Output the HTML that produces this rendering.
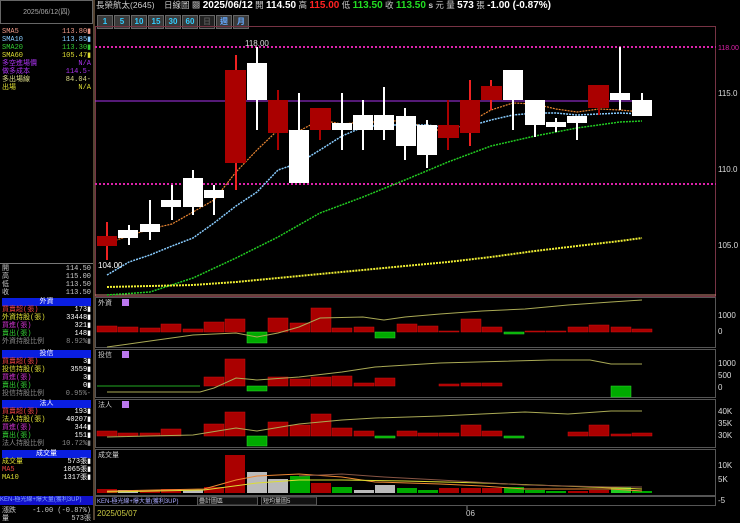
<!DOCTYPE html><html><head><meta charset="utf-8"><style>
body{margin:0;background:#000;width:740px;height:520px;overflow:hidden;position:relative;font-family:"Liberation Sans","Noto Sans CJK TC",sans-serif;}
.a{position:absolute;}
.l{position:absolute;left:2px;width:89px;font-size:7px;line-height:8px;font-family:"Liberation Mono","Noto Sans CJK TC",monospace;}
.l div{display:flex;justify-content:space-between;height:8px}
.h{background:#0a1ee0;color:#fff;text-align:center;font-size:7px;line-height:9px;display:block!important}
.btn{display:inline-block;width:14px;height:12px;background:#3a3a3a;border:1px solid #666;color:#3cf;font-size:8px;text-align:center;line-height:12px;margin-right:1px;font-weight:bold}
</style></head><body>
<div class="a" style="left:0;top:0;width:93px;height:24px;border:1px solid #666;color:#aaa;font-size:7px;text-align:center;line-height:24px;box-sizing:border-box">2025/06/12(四)</div>
<div class="a" style="left:93px;top:0;width:2px;height:520px;background:#543"></div>
<div class="a" style="left:96px;top:0;font-size:8.5px;color:#ccc;line-height:10px;white-space:nowrap">長榮航太(2645) &nbsp; &nbsp;日線圖 ▩ <b style="color:#fff;font-size:10px">2025/06/12</b> 開 <b style="color:#fff;font-size:10px">114.50</b> 高 <b style="color:#f22;font-size:10px">115.00</b> 低 <b style="color:#2d2;font-size:10px">113.50</b> 收 <b style="color:#2d2;font-size:10px">113.50</b> <b>s</b> 元 量 <b style="color:#fff;font-size:10px">573</b> 張 <b style="color:#fff;font-size:10px">-1.00 (-0.87%)</b></div>
<div class="a" style="left:97px;top:11px;white-space:nowrap"><span class="btn">1</span><span class="btn">5</span><span class="btn">10</span><span class="btn">15</span><span class="btn">30</span><span class="btn">60</span><span class="btn" style="background:#222;color:#555">日</span><span class="btn" style="color:#6af">週</span><span class="btn" style="color:#6af">月</span></div>
<div class="l" style="top:28px">
<div style="color:#e98"><span>SMA5</span><span>113.80▮</span></div>
<div style="color:#8cf"><span>SMA10</span><span>113.85▮</span></div>
<div style="color:#3c3"><span>SMA20</span><span>113.30▮</span></div>
<div style="color:#dd3"><span>SMA60</span><span>105.47▮</span></div>
<div style="color:#a3e"><span>多空進場價</span><span>N/A</span></div>
<div style="color:#a3e"><span>做多成本</span><span>114.5-</span></div>
<div style="color:#dd8"><span>多出場線</span><span>84.04-</span></div>
<div style="color:#dd3"><span>出場</span><span>N/A</span></div></div>
<div class="a" style="left:0;top:263px;width:93px;height:1px;background:#777"></div>
<div class="l" style="top:265px;color:#ccc">
<div><span>開</span><span>114.50</span></div><div><span>高</span><span>115.00</span></div><div><span>低</span><span>113.50</span></div><div><span>收</span><span>113.50</span></div></div>
<div class="l" style="top:298px"><div class="h">外資</div>
<div style="color:#e44"><span>買賣超(張)</span><span style="color:#fff">173▮</span></div>
<div style="color:#dd3"><span>外資持股(張)</span><span style="color:#fff">33448▮</span></div>
<div style="color:#c3c"><span>買進(張)</span><span style="color:#fff">321▮</span></div>
<div style="color:#3c3"><span>賣出(張)</span><span style="color:#fff">148▮</span></div>
<div style="color:#888"><span>外資持股比例</span><span>8.92%▮</span></div></div>
<div class="l" style="top:350px"><div class="h">投信</div>
<div style="color:#e44"><span>買賣超(張)</span><span style="color:#fff">3▮</span></div>
<div style="color:#dd3"><span>投信持股(張)</span><span style="color:#fff">3559▮</span></div>
<div style="color:#c3c"><span>買進(張)</span><span style="color:#fff">3▮</span></div>
<div style="color:#3c3"><span>賣出(張)</span><span style="color:#fff">0▮</span></div>
<div style="color:#888"><span>投信持股比例</span><span>0.95%-</span></div></div>
<div class="l" style="top:400px"><div class="h">法人</div>
<div style="color:#e44"><span>買賣超(張)</span><span style="color:#fff">193▮</span></div>
<div style="color:#dd3"><span>法人持股(張)</span><span style="color:#fff">40207▮</span></div>
<div style="color:#c3c"><span>買進(張)</span><span style="color:#fff">344▮</span></div>
<div style="color:#3c3"><span>賣出(張)</span><span style="color:#fff">151▮</span></div>
<div style="color:#888"><span>法人持股比例</span><span>10.72%▮</span></div></div>
<div class="l" style="top:450px"><div class="h">成交量</div>
<div style="color:#dd3"><span>成交量</span><span style="color:#fff">573張▮</span></div>
<div style="color:#e44"><span>MA5</span><span style="color:#fff">1065張▮</span></div>
<div style="color:#dd3"><span>MA10</span><span style="color:#fff">1317張▮</span></div></div>
<div class="a" style="left:0;top:496px;width:93px;height:9px;background:#11c;color:#8af;font-size:6px;line-height:9px;white-space:nowrap;overflow:hidden">KEN-極光線+爆大量(獲利3UP)</div>
<div class="l" style="top:507px;color:#ccc"><div><span>漲跌</span><span>-1.00 (-0.87%)</span></div><div><span>量</span><span>573張</span></div></div>

<svg class="a" style="left:0;top:0" width="740" height="520">
<g fill="none" stroke="#555"><rect x="95.5" y="26.5" width="620" height="270" stroke="#734"/>
<rect x="95.5" y="297.5" width="620" height="50"/><rect x="95.5" y="349.5" width="620" height="48"/><rect x="95.5" y="399.5" width="620" height="48"/><rect x="95.5" y="449.5" width="620" height="46"/></g>
<line x1="95" y1="47" x2="716" y2="47" stroke="#d2a" stroke-width="2" stroke-dasharray="2,2"/>
<line x1="95" y1="184" x2="716" y2="184" stroke="#d2a" stroke-width="2" stroke-dasharray="2,2"/>
<line x1="95" y1="101" x2="642" y2="101" stroke="#a3e"/>
<line x1="95" y1="295" x2="716" y2="295" stroke="#c87"/>
<g font-size="8" fill="#ddd" font-family="Liberation Sans"><text x="245" y="46">118.00</text><text x="98" y="268" fill="#fff">104.00</text>
<text x="718" y="50" fill="#d2a" font-size="7">118.00</text><text x="718" y="96">115.0</text><text x="718" y="172">110.0</text><text x="718" y="248">105.0</text>
<text x="718" y="318">1000</text><text x="718" y="334">0</text><text x="718" y="366">1000</text><text x="718" y="378">500</text><text x="718" y="390">0</text>
<text x="718" y="414">40K</text><text x="718" y="426">35K</text><text x="718" y="438">30K</text><text x="718" y="468">10K</text><text x="718" y="482">5K</text><text x="718" y="503">-5</text></g>
<polyline fill="none" stroke="#e83" stroke-width="1.2" stroke-dasharray="2,1" points="107,243 129,236 150,229 172,224 193,212 214,200 236,172 257,150 278,130 299,131 320,120 342,124 363,122 384,122 405,120 427,128 448,132 470,122 491,110 513,103 535,104 556,109 577,112 599,109 620,110 642,112"/>
<polyline fill="none" stroke="#8cf" stroke-width="1.5" stroke-dasharray="2,1" points="107,275 129,262 150,255 172,246 193,238 214,223 236,206 257,192 278,170 299,163 320,150 342,136 363,127 384,125 405,125 427,125 448,128 470,126 491,120 513,115 535,113 556,113 577,115 599,114 620,113 642,114"/>
<polyline fill="none" stroke="#2c2" stroke-width="1.5" stroke-dasharray="2,1" points="107,295 150,292 193,278 236,258 278,237 320,213 363,197 405,180 448,162 491,146 535,136 577,128 620,122 642,121"/>
<polyline fill="none" stroke="#ee3" stroke-width="2" stroke-dasharray="2,1" points="107,287 150,286 193,285 236,282 278,278 320,274 363,270 405,266 448,262 491,257 535,251 577,246 620,241 642,238"/>
<g stroke-width="2">
<line x1="107" y1="222" x2="107" y2="260" stroke="#e22"/><rect x="97" y="236" width="20" height="10" fill="#a00"/>
<line x1="129" y1="225" x2="129" y2="245" stroke="#fff"/><rect x="118" y="230" width="20" height="8" fill="#fff"/>
<line x1="150" y1="200" x2="150" y2="240" stroke="#fff"/><rect x="140" y="224" width="20" height="8" fill="#fff"/>
<line x1="172" y1="185" x2="172" y2="220" stroke="#fff"/><rect x="161" y="200" width="20" height="7" fill="#fff"/>
<line x1="193" y1="170" x2="193" y2="215" stroke="#fff"/><rect x="183" y="178" width="20" height="29" fill="#fff"/>
<line x1="214" y1="185" x2="214" y2="215" stroke="#fff"/><rect x="204" y="190" width="20" height="8" fill="#fff"/>
<line x1="236" y1="55" x2="236" y2="190" stroke="#e22"/><rect x="225" y="70" width="21" height="93" fill="#a00"/>
<line x1="257" y1="47" x2="257" y2="130" stroke="#fff"/><rect x="247" y="63" width="20" height="37" fill="#fff"/>
<line x1="278" y1="90" x2="278" y2="150" stroke="#a00"/><rect x="268" y="100" width="20" height="33" fill="#a00"/>
<line x1="299" y1="93" x2="299" y2="183" stroke="#fff"/><rect x="289" y="130" width="20" height="53" fill="#fff"/>
<line x1="320" y1="108" x2="320" y2="140" stroke="#a00"/><rect x="310" y="108" width="21" height="22" fill="#a00"/>
<line x1="342" y1="93" x2="342" y2="150" stroke="#fff"/><rect x="332" y="123" width="20" height="7" fill="#fff"/>
<line x1="363" y1="100" x2="363" y2="150" stroke="#fff"/><rect x="353" y="115" width="20" height="15" fill="#fff"/>
<line x1="384" y1="87" x2="384" y2="140" stroke="#fff"/><rect x="374" y="115" width="20" height="15" fill="#fff"/>
<line x1="405" y1="108" x2="405" y2="160" stroke="#fff"/><rect x="396" y="116" width="20" height="30" fill="#fff"/>
<line x1="427" y1="120" x2="427" y2="168" stroke="#fff"/><rect x="417" y="125" width="20" height="30" fill="#fff"/>
<line x1="448" y1="100" x2="448" y2="150" stroke="#a00"/><rect x="438" y="125" width="21" height="13" fill="#a00"/>
<line x1="470" y1="80" x2="470" y2="146" stroke="#e22"/><rect x="460" y="100" width="20" height="33" fill="#a00"/>
<line x1="491" y1="80" x2="491" y2="110" stroke="#e22"/><rect x="481" y="86" width="21" height="14" fill="#a00"/>
<line x1="513" y1="70" x2="513" y2="130" stroke="#fff"/><rect x="503" y="70" width="20" height="30" fill="#fff"/>
<line x1="535" y1="100" x2="535" y2="137" stroke="#fff"/><rect x="525" y="100" width="20" height="25" fill="#fff"/>
<line x1="556" y1="118" x2="556" y2="132" stroke="#fff"/><rect x="546" y="122" width="20" height="5" fill="#fff"/>
<line x1="577" y1="116" x2="577" y2="140" stroke="#fff"/><rect x="567" y="116" width="20" height="7" fill="#fff"/>
<line x1="599" y1="85" x2="599" y2="115" stroke="#a00"/><rect x="588" y="85" width="21" height="23" fill="#a00"/>
<line x1="620" y1="47" x2="620" y2="110" stroke="#fff"/><rect x="610" y="93" width="20" height="7" fill="#fff"/>
<line x1="642" y1="93" x2="642" y2="116" stroke="#fff"/><rect x="632" y="100" width="20" height="16" fill="#fff"/>
</g>
<g font-size="7" fill="#ccc"><text x="98" y="305">外資</text><text x="98" y="357">投信</text><text x="98" y="407">法人</text><text x="98" y="457">成交量</text></g>
<g fill="#b7e"><rect x="122" y="299" width="7" height="7"/><rect x="122" y="351" width="7" height="7"/><rect x="122" y="401" width="7" height="7"/></g>
<g fill="#a00" stroke="#c11" stroke-width=".5">
<rect x="97" y="326" width="20" height="6"/><rect x="118" y="327" width="20" height="5"/><rect x="140" y="328" width="20" height="4"/><rect x="161" y="324" width="20" height="8"/><rect x="183" y="329" width="20" height="3"/><rect x="204" y="322" width="20" height="10"/><rect x="225" y="319" width="20" height="13"/><rect x="268" y="318" width="20" height="14"/><rect x="290" y="323" width="20" height="9"/><rect x="311" y="308" width="20" height="24"/><rect x="332" y="328" width="20" height="4"/><rect x="354" y="327" width="20" height="5"/><rect x="397" y="324" width="20" height="8"/><rect x="418" y="326" width="20" height="6"/><rect x="439" y="331" width="20" height="1"/><rect x="461" y="319" width="20" height="13"/><rect x="482" y="327" width="20" height="5"/><rect x="525" y="331" width="20" height="1"/><rect x="546" y="331" width="20" height="1"/><rect x="568" y="327" width="20" height="5"/><rect x="589" y="325" width="20" height="7"/><rect x="611" y="327" width="20" height="5"/><rect x="632" y="329" width="20" height="3"/></g>
<g fill="#0a0" stroke="#3d3" stroke-width=".5"><rect x="247" y="332" width="20" height="11"/><rect x="375" y="332" width="20" height="6"/><rect x="504" y="332" width="20" height="2"/></g>
<polyline fill="none" stroke="#aa5" points="107,347 150,341 193,335 236,333 257,337 278,333 299,327 320,318 363,317 384,320 405,317 440,314 482,311 525,309 568,305 611,302 642,300"/>
<g fill="#a00" stroke="#c11" stroke-width=".5"><rect x="204" y="377" width="20" height="9"/><rect x="225" y="359" width="20" height="27"/><rect x="268" y="377" width="20" height="9"/><rect x="290" y="379" width="20" height="7"/><rect x="311" y="377" width="20" height="9"/><rect x="332" y="376" width="20" height="10"/><rect x="354" y="383" width="20" height="3"/><rect x="375" y="378" width="20" height="8"/><rect x="439" y="384" width="20" height="2"/><rect x="461" y="383" width="20" height="3"/><rect x="482" y="383" width="20" height="3"/></g>
<g fill="#0a0" stroke="#3d3" stroke-width=".5"><rect x="247" y="386" width="20" height="5"/><rect x="611" y="386" width="20" height="11"/></g>
<line x1="97" y1="386" x2="200" y2="386" stroke="#2a2"/>
<polyline fill="none" stroke="#aa5" points="107,392 200,392 214,388 236,378 257,380 299,377 342,372 375,367 440,363 550,360 590,360 611,364 642,364"/>
<g fill="#a00" stroke="#c11" stroke-width=".5"><rect x="97" y="431" width="20" height="5"/><rect x="118" y="433" width="20" height="3"/><rect x="140" y="433" width="20" height="3"/><rect x="161" y="429" width="20" height="7"/><rect x="204" y="424" width="20" height="12"/><rect x="225" y="412" width="20" height="24"/><rect x="268" y="422" width="20" height="14"/><rect x="290" y="425" width="20" height="11"/><rect x="311" y="414" width="20" height="22"/><rect x="332" y="428" width="20" height="8"/><rect x="354" y="431" width="20" height="5"/><rect x="397" y="431" width="20" height="5"/><rect x="418" y="433" width="20" height="3"/><rect x="439" y="433" width="20" height="3"/><rect x="461" y="425" width="20" height="11"/><rect x="482" y="431" width="20" height="5"/><rect x="568" y="432" width="20" height="4"/><rect x="589" y="425" width="20" height="11"/><rect x="611" y="434" width="20" height="2"/><rect x="632" y="433" width="20" height="3"/></g>
<g fill="#0a0" stroke="#3d3" stroke-width=".5"><rect x="247" y="436" width="20" height="10"/><rect x="375" y="436" width="20" height="2"/><rect x="504" y="436" width="20" height="2"/></g>
<polyline fill="none" stroke="#aa5" points="107,437 193,435 236,428 257,431 299,424 342,420 375,418 440,416 482,414 525,412 568,414 611,411 642,411"/>
<g stroke-width=".5">
<rect x="97" y="489" width="20" height="4" fill="#a00"/><rect x="118" y="490" width="20" height="3" fill="#bbb"/><rect x="140" y="490" width="20" height="3" fill="#a00"/><rect x="161" y="489" width="20" height="4" fill="#a00"/><rect x="183" y="490" width="20" height="3" fill="#bbb"/><rect x="204" y="487" width="20" height="6" fill="#a00"/><rect x="225" y="455" width="20" height="38" fill="#a00"/><rect x="247" y="472" width="20" height="21" fill="#bbb"/><rect x="268" y="479" width="20" height="14" fill="#bbb"/><rect x="290" y="476" width="20" height="17" fill="#0a0"/><rect x="311" y="483" width="20" height="10" fill="#a00"/><rect x="332" y="487" width="20" height="6" fill="#0a0"/><rect x="354" y="490" width="20" height="3" fill="#bbb"/><rect x="375" y="485" width="20" height="8" fill="#bbb"/><rect x="397" y="488" width="20" height="5" fill="#0a0"/><rect x="418" y="490" width="20" height="3" fill="#0a0"/><rect x="439" y="488" width="20" height="5" fill="#a00"/><rect x="461" y="488" width="20" height="5" fill="#a00"/><rect x="482" y="488" width="20" height="5" fill="#a00"/><rect x="504" y="487" width="20" height="6" fill="#0a0"/><rect x="525" y="490" width="20" height="3" fill="#0a0"/><rect x="546" y="491" width="20" height="2" fill="#0a0"/><rect x="568" y="491" width="20" height="2" fill="#a00"/><rect x="589" y="490" width="20" height="3" fill="#a00"/><rect x="611" y="487" width="20" height="6" fill="#2c2"/><rect x="632" y="491" width="20" height="2" fill="#0a0"/></g>
<polyline fill="none" stroke="#e83" points="107,491 204,489 236,480 257,476 299,474 342,477 375,482 440,484 482,486 525,489 611,489 642,491"/>
<polyline fill="none" stroke="#dd3" points="107,492 204,490 257,483 299,480 342,480 405,481 482,483 642,489"/>
<polyline fill="none" stroke="#854" points="299,476 342,474 384,477 440,480 525,485 611,487 642,487"/>
<rect x="95.5" y="496.5" width="620" height="9" fill="#000" stroke="#555"/>
<rect x="197.5" y="497" width="60" height="8" fill="#111" stroke="#555"/><rect x="261.5" y="497" width="55" height="8" fill="#111" stroke="#555"/>
<g font-size="6" fill="#aaf"><text x="97" y="503">KEN-極光線+爆大量(獲利3UP)</text><text x="199" y="503" fill="#ccc">疊計圖區</text><text x="263" y="503" fill="#ccc">短均量圖5</text></g>
<text x="97" y="516" font-size="8" fill="#cc4">2025/05/07</text><text x="466" y="516" font-size="8" fill="#ccc">06</text>
<line x1="467" y1="506" x2="467" y2="510" stroke="#888"/>
</svg>
</body></html>
